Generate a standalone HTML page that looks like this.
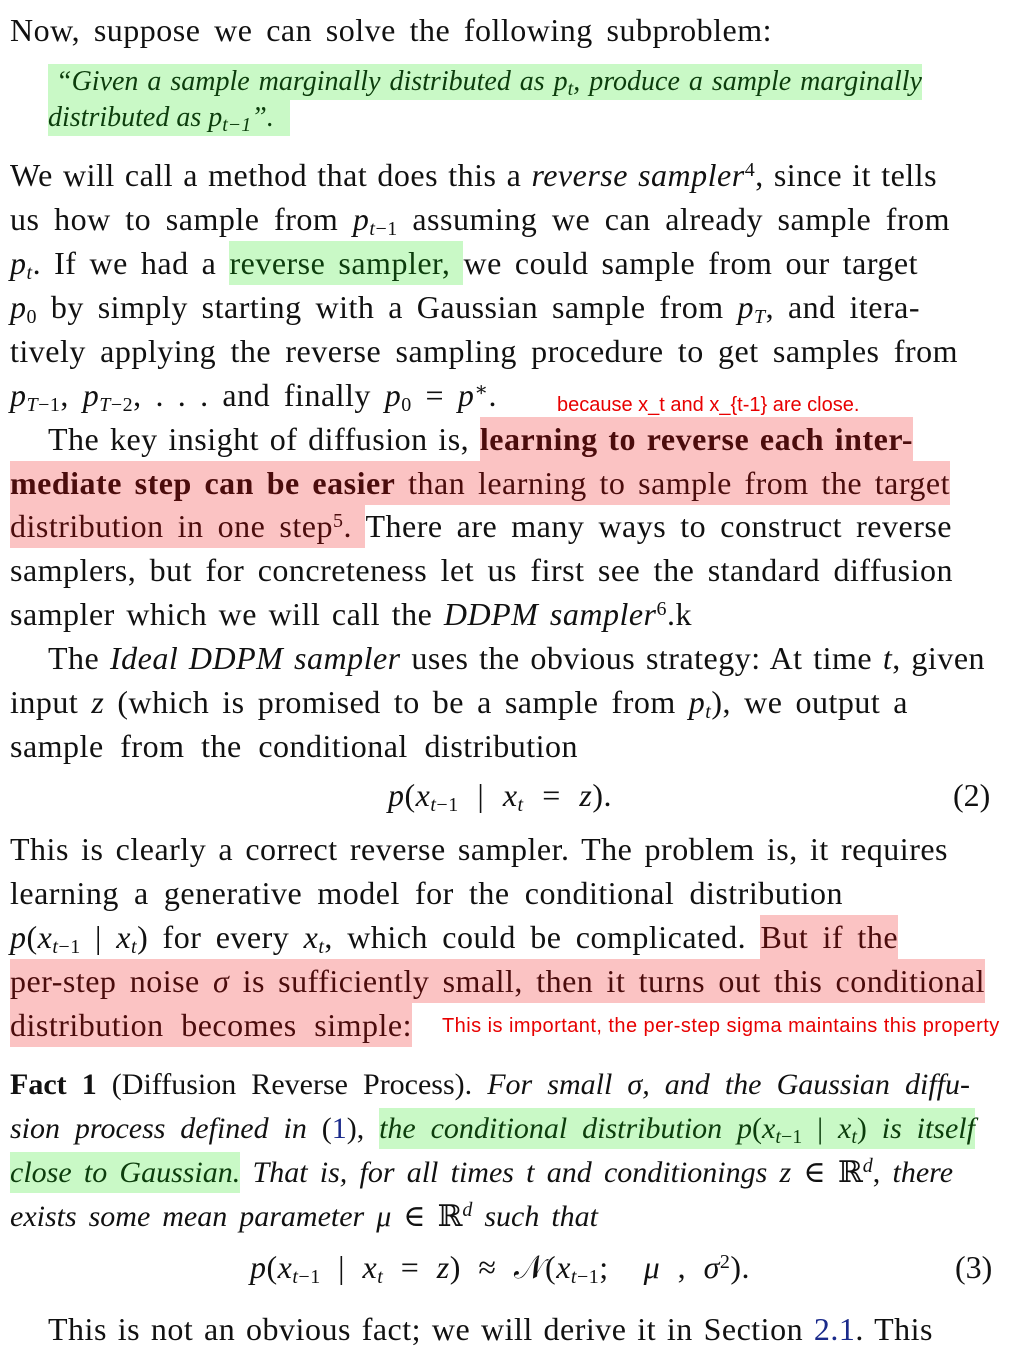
<!DOCTYPE html>
<html><head><meta charset="utf-8"><style>
body{margin:0;width:1022px;height:1356px;background:#fff;position:relative;overflow:hidden;font-family:"Liberation Serif","DejaVu Serif",serif;color:#111}
.l{position:absolute;height:40px;line-height:40px;font-size:32px;letter-spacing:0.5px;white-space:nowrap;text-align:justify;text-align-last:justify}
.f{font-size:30px;letter-spacing:0}
i{font-style:italic}
sub{font-size:20px;vertical-align:-5px;line-height:0}
sup{font-size:20px;vertical-align:10px;line-height:0}
.g{background:#c9f9c6;color:#0c3d0c;padding:4px 0}
.p{background:#fbc3c3;color:#4b0c0c;padding:4px 0}
.a{position:absolute;color:#e80000;font-family:"Liberation Sans",sans-serif;font-size:20px;white-space:nowrap;line-height:24px}
.b{color:#1a2a8a}
.q{position:absolute;background:#c9f9c6;color:#0c3d0c;font-size:28px;letter-spacing:0;line-height:36px;height:36px;white-space:nowrap;text-align:justify;text-align-last:justify;font-style:italic;box-sizing:border-box}
</style></head><body>
<div class="l" style="top:10px;left:10px;width:762px">Now, suppose we can solve the following subproblem:</div>
<div class="q" style="top:64px;left:48px;width:874px;padding-left:8px">“Given a sample marginally distributed as p<sub>t</sub>, produce a sample marginally</div>
<div class="q" style="top:100px;left:48px;width:242px;text-align-last:left">distributed as p<sub>t−1</sub>”.</div>
<div class="l" style="top:155px;left:10px;width:927px">We will call a method that does this a <i>reverse sampler</i><sup>4</sup>, since it tells</div>
<div class="l" style="top:199px;left:10px;width:940px">us how to sample from <i>p</i><sub><i>t</i>−1</sub> assuming we can already sample from</div>
<div class="l" style="top:243px;left:10px;width:908px"><i>p<sub>t</sub></i>. If we had a <span class="g">reverse sampler, </span>we could sample from our target</div>
<div class="l" style="top:287px;left:10px;width:910px"><i>p</i><sub>0</sub> by simply starting with a Gaussian sample from <i>p<sub>T</sub></i>, and itera-</div>
<div class="l" style="top:331px;left:10px;width:948px">tively applying the reverse sampling procedure to get samples from</div>
<div class="l" style="top:375px;left:10px;width:487px"><i>p</i><sub><i>T</i>−1</sub>, <i>p</i><sub><i>T</i>−2</sub>, . . . and finally <i>p</i><sub>0</sub> = <i>p</i><sup>∗</sup>.</div>
<div class="a" style="top:393px;left:557px">because x_t and x_{t-1} are close.</div>
<div class="l" style="top:419px;left:48px;width:865px">The key insight of diffusion is, <span class="p"><b>learning to reverse each inter-</b></span></div>
<div class="l" style="top:463px;left:10px;width:940px"><span class="p"><b>mediate step can be easier</b> than learning to sample from the target</span></div>
<div class="l" style="top:506px;left:10px;width:942px"><span class="p">distribution in one step<sup>5</sup>. </span>There are many ways to construct reverse</div>
<div class="l" style="top:550px;left:10px;width:943px">samplers, but for concreteness let us first see the standard diffusion</div>
<div class="l" style="top:594px;left:10px;width:682px">sampler which we will call the <i>DDPM sampler</i><sup>6</sup>.k</div>
<div class="l" style="top:638px;left:48px;width:937px">The <i>Ideal DDPM sampler</i> uses the obvious strategy: At time <i>t</i>, given</div>
<div class="l" style="top:682px;left:10px;width:898px">input <i>z</i> (which is promised to be a sample from <i>p<sub>t</sub></i>), we output a</div>
<div class="l" style="top:726px;left:10px;width:568px">sample from the conditional distribution</div>
<div class="l" style="top:775px;left:388px;width:224px"><i>p</i>(<i>x</i><sub><i>t</i>−1</sub> | <i>x<sub>t</sub></i> = <i>z</i>).</div>
<div class="l" style="top:775px;left:953px;width:35px;text-align-last:left;letter-spacing:0">(2)</div>
<div class="l" style="top:829px;left:10px;width:938px">This is clearly a correct reverse sampler. The problem is, it requires</div>
<div class="l" style="top:873px;left:10px;width:833px">learning a generative model for the conditional distribution</div>
<div class="l" style="top:917px;left:10px;width:888px"><i>p</i>(<i>x</i><sub><i>t</i>−1</sub> | <i>x<sub>t</sub></i>) for every <i>x<sub>t</sub></i>, which could be complicated. <span class="p">But if the</span></div>
<div class="l" style="top:961px;left:10px;width:975px"><span class="p">per-step noise <i>σ</i> is sufficiently small, then it turns out this conditional</span></div>
<div class="l" style="top:1005px;left:10px;width:402px"><span class="p">distribution becomes simple:</span></div>
<div class="a" style="top:1014px;left:442px;font-size:20px;letter-spacing:0.45px">This is important, the per-step sigma maintains this property</div>
<div class="l f" style="top:1065px;left:10px;width:960px"><b>Fact 1</b> (Diffusion Reverse Process). <i>For small σ, and the Gaussian diffu-</i></div>
<div class="l f" style="top:1109px;left:10px;width:965px"><i>sion process defined in </i>(<span class="b">1</span>), <span class="g"><i>the conditional distribution p</i>(<i>x</i><sub><i>t</i>−1</sub> | <i>x<sub>t</sub></i>) <i>is itself</i></span></div>
<div class="l f" style="top:1153px;left:10px;width:943px"><span class="g"><i>close to Gaussian.</i></span> <i>That is, for all times t and conditionings z</i> ∈ ℝ<sup><i>d</i></sup>, <i>there</i></div>
<div class="l f" style="top:1197px;left:10px;width:588px"><i>exists some mean parameter μ</i> ∈ ℝ<sup><i>d</i></sup> <i>such that</i></div>
<div class="l" style="top:1247px;left:250px;width:500px"><i>p</i>(<i>x</i><sub><i>t</i>−1</sub> | <i>x<sub>t</sub></i> = <i>z</i>) ≈ 𝒩(<i>x</i><sub><i>t</i>−1</sub>; &nbsp;<i>μ</i> , <i>σ</i><sup>2</sup>).</div>
<div class="l" style="top:1247px;left:955px;width:33px;text-align-last:left;letter-spacing:0">(3)</div>
<div class="l" style="top:1309px;left:48px;width:885px">This is not an obvious fact; we will derive it in Section <span class="b">2.1</span>. This</div>
</body></html>
